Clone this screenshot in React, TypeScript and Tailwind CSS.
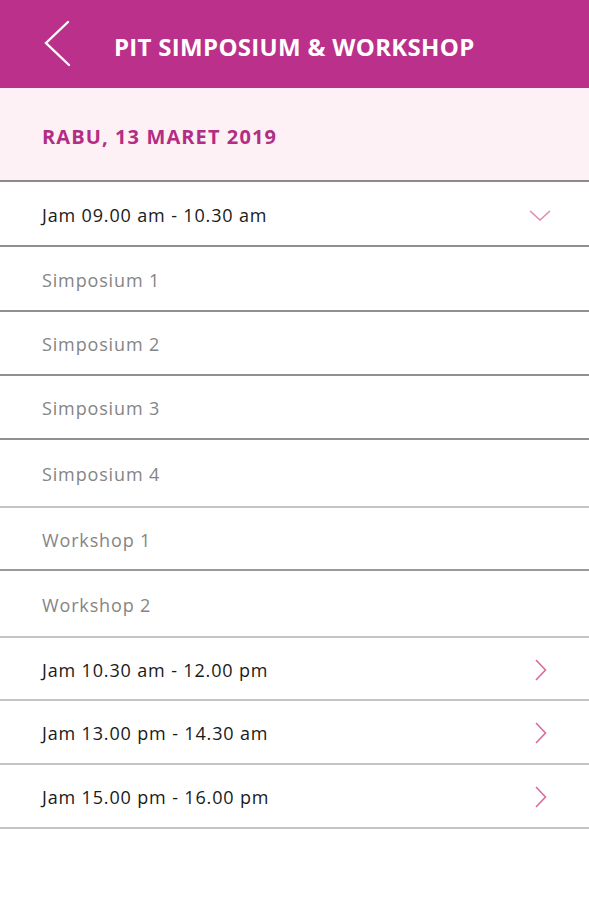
import React from "react";

type Row = { label: string; kind: "head" | "sub"; icon?: "down" | "right"; h: number; border: string };

const rows: Row[] = [
  { label: "Jam 09.00 am - 10.30 am", kind: "head", icon: "down", h: 65, border: "border-[#8f8f8f]" },
  { label: "Simposium 1", kind: "sub", h: 65, border: "border-[#8f8f8f]" },
  { label: "Simposium 2", kind: "sub", h: 64, border: "border-[#8f8f8f]" },
  { label: "Simposium 3", kind: "sub", h: 64, border: "border-[#8f8f8f]" },
  { label: "Simposium 4", kind: "sub", h: 68, border: "border-[#c4c4c4]" },
  { label: "Workshop 1", kind: "sub", h: 63, border: "border-[#9a9a9a]" },
  { label: "Workshop 2", kind: "sub", h: 67, border: "border-[#c4c4c4]" },
  { label: "Jam 10.30 am - 12.00 pm", kind: "head", icon: "right", h: 63, border: "border-[#c4c4c4]" },
  { label: "Jam 13.00 pm - 14.30 am", kind: "head", icon: "right", h: 64, border: "border-[#c4c4c4]" },
  { label: "Jam 15.00 pm - 16.00 pm", kind: "head", icon: "right", h: 64, border: "border-[#c4c4c4]" },
];

function Down() {
  return (
    <svg width="22" height="12" viewBox="0 0 22 12" className="mr-[38px] mt-[5px]">
      <path d="M1 1 L11 10 L21 1" fill="none" stroke="#e08ab0" strokeWidth="1.6" />
    </svg>
  );
}

function Right() {
  return (
    <svg width="12" height="22" viewBox="0 0 12 22" className="mr-[42px] mt-[2px]">
      <path d="M1 1 L10.5 11 L1 21" fill="none" stroke="#d86a9d" strokeWidth="1.6" />
    </svg>
  );
}

export default function App() {
  return (
    <div className="w-[589px] h-[900px] bg-white" style={{ fontFamily: "'Open Sans', Lato, sans-serif" }}>
      <div className="h-[88px] bg-[#bb308a] flex items-center">
        <svg width="30" height="50" viewBox="0 0 30 50" className="ml-[42px]">
          <path d="M26 3 L4 24 L27 46" fill="none" stroke="white" strokeWidth="2.4" strokeLinecap="round" />
        </svg>
        <div className="ml-[42px] mt-[6px] text-white font-bold text-[24px] tracking-[0.3px]">PIT SIMPOSIUM &amp; WORKSHOP</div>
      </div>
      <div className="h-[94px] bg-[#fdf1f5] flex items-center pl-[42px] border-b-2 border-[#8a8a8a]">
        <div className="text-[#b32d85] font-bold text-[20px] tracking-[1.1px] mt-[6px]">RABU, 13 MARET 2019</div>
      </div>
      {rows.map((r) => (
        <div
          key={r.label}
          style={{ height: r.h }}
          className={`flex items-center justify-between pl-[42px] border-b-2 ${r.border}`}
        >
          <div
            className={
              r.kind === "head"
                ? "mt-[3px] text-[18px] tracking-[0.85px] text-[#1a1a1a]"
                : "mt-[3px] text-[18px] tracking-[0.85px] text-[#858585]"
            }
          >
            {r.label}
          </div>
          {r.icon === "down" && <Down />}
          {r.icon === "right" && <Right />}
        </div>
      ))}
    </div>
  );
}
